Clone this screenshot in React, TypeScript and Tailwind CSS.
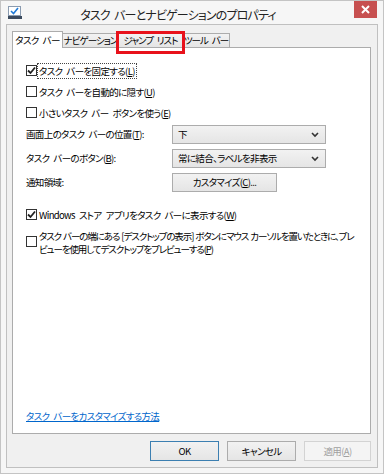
import React from 'react';

const font = "font-['Meiryo_UI','Noto_Sans_CJK_JP',sans-serif]";

const Box = ({ checked }: { checked?: boolean }) => (
  <span className="w-[11px] h-[11px] border border-[#333] bg-white flex items-center justify-center shrink-0">
    {checked && (
      <svg width="9" height="9" viewBox="0 0 9 9">
        <path d="M1 4.5 L3.5 7 L8 1.5" stroke="#222" strokeWidth="1.8" fill="none" />
      </svg>
    )}
  </span>
);

const Check = ({ checked, focus, children }: { checked?: boolean; focus?: boolean; children: React.ReactNode }) => (
  <div className="h-[21px] flex items-center gap-[1px] whitespace-nowrap">
    <Box checked={checked} />
    <span className={`px-[1px] leading-[14px] ${focus ? 'outline outline-1 outline-dotted outline-[#444]' : ''}`}>{children}</span>
  </div>
);

const Select = ({ value }: { value: string }) => (
  <div className="w-[154px] h-[19px] border border-[#acacac] bg-gradient-to-b from-[#f2f2f2] to-[#e5e5e5] flex items-center pl-[5px] pr-[6px]">
    <span className="flex-1">{value}</span>
    <svg width="8" height="6" viewBox="0 0 8 6">
      <path d="M1 1 L4 4 L7 1" stroke="#333" strokeWidth="1.6" fill="none" />
    </svg>
  </div>
);

const Btn = ({ children, def, disabled, w }: { children: React.ReactNode; def?: boolean; disabled?: boolean; w: string }) => (
  <div
    className={`${w} h-[20px] flex items-center justify-center border ${
      def ? 'border-[#3c7fb1]' : disabled ? 'border-[#d3d3d3]' : 'border-[#acacac]'
    } ${disabled ? 'bg-[#f4f4f4] text-[#a0a0a0]' : 'bg-gradient-to-b from-[#f2f2f2] to-[#e5e5e5] text-black'}`}
  >
    {children}
  </div>
);

const tab = 'h-[15px] border border-[#acacac] border-l-0 bg-gradient-to-b from-[#f2f2f2] to-[#e5e5e5] flex items-center justify-center whitespace-nowrap tracking-[-0.95px]';

export default function App() {
  return (
    <div className={`w-[384px] h-[474px] bg-[#f6f6f6] border border-[#c4c4c4] flex flex-col text-[9.5px] tracking-[-0.65px] [word-spacing:2.5px] text-black ${font} [font-feature-settings:'palt']`}>
      {/* title bar */}
      <div className="h-[23px] flex items-start">
        <svg className="mt-[5px] ml-[7px]" width="14" height="13" viewBox="0 0 14 13">
          <rect x="0.5" y="0.5" width="12" height="9" fill="#fff" stroke="#8a9bb0" />
          <path d="M3 5 L5.5 7.5 L10 2" stroke="#1f7ad8" strokeWidth="1.6" fill="none" />
          <rect x="0" y="10" width="14" height="3" fill="#3b4a5e" />
        </svg>
        <div className="flex-1 text-center text-[12px] tracking-[-0.85px] pt-[5px] pr-[20px] text-[#222]">タスク バーとナビゲーションのプロパティ</div>
        <div className="w-[23px] h-[17px] mr-[6px] bg-[#c75050] flex items-center justify-center">
          <svg width="9" height="9" viewBox="0 0 9 9">
            <path d="M1 1 L8 8 M8 1 L1 8" stroke="#fff" strokeWidth="2" />
          </svg>
        </div>
      </div>

      {/* client */}
      <div className="mx-[5px] mb-[5px] flex-1 border border-[#c0c0c0] bg-[#f0f0f0] flex flex-col px-[5px]">
        {/* tabs */}
        <div className="h-[17px] flex items-end mt-[6px] relative z-10">
          <div className="h-[17px] w-[51px] bg-white border border-[#acacac] border-b-0 flex items-center justify-center whitespace-nowrap">タスク バー</div>
          <div className={`${tab} w-[56px]`}>ナビゲーション</div>
          <div className={`${tab} w-[64px] relative`}>
            ジャンプ リスト
            <div className="absolute -left-[3px] -right-[3px] -top-[3px] -bottom-[7px] border-[3px] border-[#e8121b]" />
          </div>
          <div className={`${tab} w-[47px]`}>ツール バー</div>
        </div>

        {/* panel */}
        <div className="h-[387px] -mt-[1px] mr-[1px] bg-white border border-[#acacac] flex flex-col pt-[12px] pl-[13px] pb-[10px]">
          <Check checked focus>タスク バーを固定する(<u>L</u>)</Check>
          <Check>タスク バーを自動的に隠す(<u>U</u>)</Check>
          <Check>小さいタスク バー ボタンを使う(<u>E</u>)</Check>

          <div className="mt-[2px] flex items-center whitespace-nowrap">
            <span className="w-[146px]">画面上のタスク バーの位置(<u>T</u>):</span>
            <Select value="下" />
          </div>
          <div className="mt-[5px] flex items-center whitespace-nowrap">
            <span className="w-[146px]">タスク バーのボタン(<u>B</u>):</span>
            <Select value="常に結合、ラベルを非表示" />
          </div>
          <div className="mt-[5px] flex items-center whitespace-nowrap">
            <span className="w-[146px]">通知領域:</span>
            <div className="w-[105px] h-[19px] border border-[#acacac] bg-gradient-to-b from-[#f2f2f2] to-[#e5e5e5] flex items-center justify-center">
              カスタマイズ(<u>C</u>)...
            </div>
          </div>

          <div className="mt-[12px]">
            <Check checked>Windows ストア アプリをタスク バーに表示する(<u>W</u>)</Check>
          </div>
          <div className="mt-[5px] flex items-start gap-[2px] whitespace-nowrap">
            <span className="mt-[6px]"><Box /></span>
            <span className="leading-[13px] tracking-[-1.1px] [word-spacing:1px]">
              タスク バーの端にある [デスクトップの表示] ボタンにマウス カーソルを置いたときに、プレ
              <br />
              ビューを使用してデスクトップをプレビューする(<u>P</u>)
            </span>
          </div>

          <div className="mt-auto">
            <span className="text-[#0066cc] underline leading-[14px]">タスク バーをカスタマイズする方法</span>
          </div>
        </div>

        {/* buttons */}
        <div className="mt-[7px] flex justify-end gap-[8px] pr-[1px]">
          <Btn def w="w-[69px]">OK</Btn>
          <Btn w="w-[69px]">キャンセル</Btn>
          <Btn disabled w="w-[67px]">適用(<u>A</u>)</Btn>
        </div>
      </div>
    </div>
  );
}
